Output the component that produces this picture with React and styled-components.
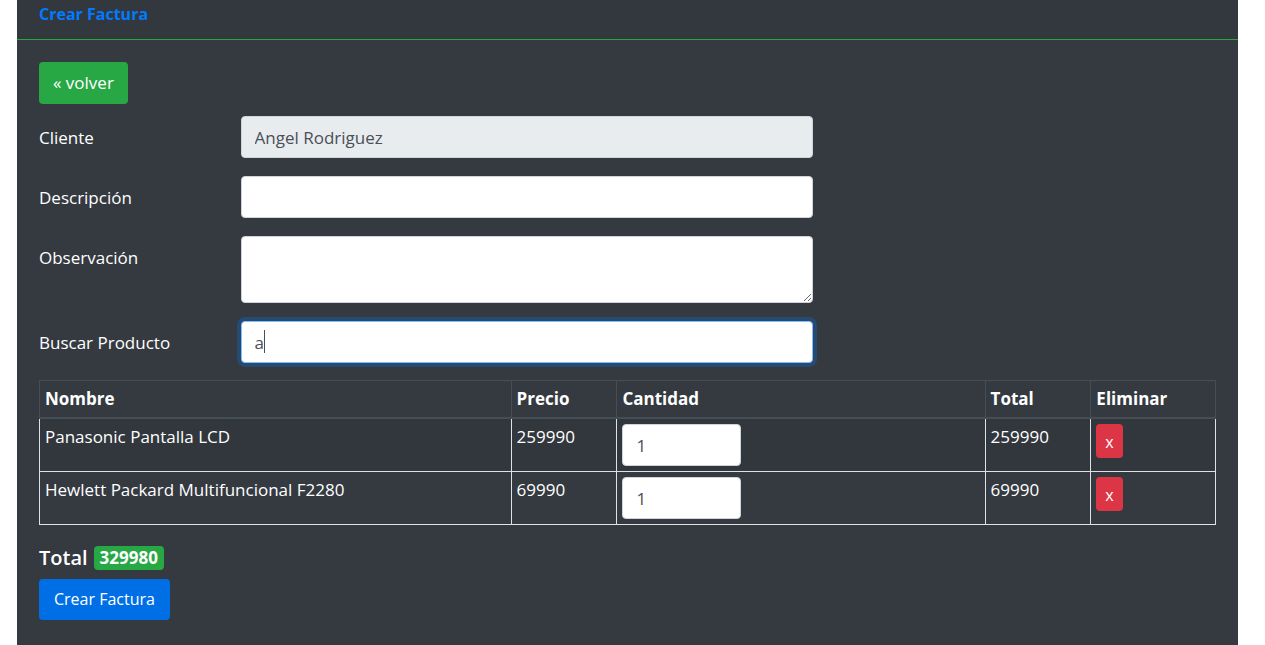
import React, { useState } from "react";
import styled, { createGlobalStyle, css } from "styled-components";

const GlobalStyle = createGlobalStyle`
  *, *::before, *::after { box-sizing: border-box; }
  body {
    margin: 0;
    background: #fff;
    color: #fff;
    font-family: "Segoe UI", "Open Sans", "Noto Sans", sans-serif;
    font-size: 17px;
    line-height: 26px;
  }
  input, textarea, button { font: inherit; }
`;

const Card = styled.main`
  min-height: 100vh;
  margin: 0 27px 0 17px;
  background: #343a40;
`;

const CardHeader = styled.header`
  padding: 0 22px 11px;
  line-height: 28px;
  font-weight: 700;
  font-size: 16px;
  color: #007bff;
  background: #32383e;
  border-bottom: 1px solid #28a745;
`;

const CardBody = styled.div`
  padding: 22px;
`;

const buttonBase = css`
  display: inline-block;
  padding: 7px 13px;
  border: 1px solid transparent;
  border-radius: 4px;
  color: #fff;
  text-decoration: none;
  cursor: pointer;
`;

const BackLink = styled.a`
  ${buttonBase}
  background: #28a745;
`;

const SubmitButton = styled.button`
  ${buttonBase}
  padding: 7px 14px;
  font-size: 16px;
  line-height: 25px;
  background: #006fe6;
`;

const DeleteButton = styled.button`
  ${buttonBase}
  display: block;
  padding: 5px 8px 3px;
  font-size: 16px;
  line-height: 24px;
  background: #dc3545;
`;

const Fields = styled.div`
  display: grid;
  gap: 18px;
  margin: 12px 0 17px;
`;

const FormRow = styled.div`
  display: flex;
  margin: 0 -16px;
`;

const Label = styled.label`
  flex: 0 0 16.6667%;
  padding: 9px 16px 7px;
`;

const Field = styled.div`
  position: relative;
  display: flex;
  flex: 0 0 50%;
  padding: 0 16px;
`;

const controlBase = css`
  display: block;
  width: 100%;
  padding: 7px 13px;
  color: #495057;
  background: #fff;
  border: 1px solid #ced4da;
  border-radius: 4px;
  outline: 0;

  &:focus {
    border-color: #80bdff;
    box-shadow: 0 0 0 4px rgba(0, 123, 255, 0.25);
  }
`;

const Input = styled.input`
  ${controlBase}
  height: 42px;
  &:disabled { background: #e9ecef; }
`;

const SearchInput = styled(Input)`
  caret-color: transparent;
`;

/* Repeats the typed text invisibly so that the bar stands at its end. */
const Caret = styled.span`
  position: absolute;
  top: 9px;
  left: 30px;
  display: flex;
  height: 23px;
  pointer-events: none;
  white-space: pre;
  color: transparent;
  border-right: 1px solid #495057;
`;

const Quantity = styled(Input)`
  width: 119px;
  appearance: textfield;
`;

const TextArea = styled.textarea`
  ${controlBase}
  height: 67px;
  resize: vertical;
`;

const Table = styled.table`
  width: 100%;
  table-layout: fixed;
  border-collapse: collapse;
  border: 1px solid #454d55;

  tbody tr:nth-of-type(odd) { background: rgba(0, 0, 0, 0.05); }
`;

const Th = styled.th`
  width: ${(p) => p.$width};
  padding: 5px;
  text-align: left;
  border: 1px solid #454d55;
  border-bottom-width: 2px;
`;

const Td = styled.td`
  padding: 5px;
  vertical-align: top;
  border: 1px solid #dee2e6;
`;

const TotalLine = styled.h5`
  display: flex;
  align-items: center;
  gap: 6px;
  margin: 20px 0 8px;
  font-size: 20px;
  font-weight: 600;
  line-height: 26px;
`;

const Badge = styled.span`
  padding: 0 6px;
  border-radius: 4px;
  background: #28a745;
  font-size: 17px;
  font-weight: 700;
  line-height: 24px;
`;

const initialItems = [
  { id: 1, name: "Panasonic Pantalla LCD", price: 259990, quantity: 1 },
  { id: 2, name: "Hewlett Packard Multifuncional F2280", price: 69990, quantity: 1 },
];

export default function App() {
  const [items, setItems] = useState(initialItems);
  const [search, setSearch] = useState("a");
  const [searching, setSearching] = useState(true);
  const total = items.reduce((sum, i) => sum + i.price * i.quantity, 0);
  const setQuantity = (id, quantity) =>
    setItems(items.map((i) => (i.id === id ? { ...i, quantity } : i)));

  return (
    <>
      <GlobalStyle />
      <Card>
        <CardHeader>Crear Factura</CardHeader>
        <CardBody>
          <BackLink href="#clientes">« volver</BackLink>
          <form onSubmit={(e) => e.preventDefault()}>
            <Fields>
              <FormRow>
                <Label htmlFor="cliente">Cliente</Label>
                <Field><Input id="cliente" defaultValue="Angel Rodriguez" disabled /></Field>
              </FormRow>
              <FormRow>
                <Label htmlFor="descripcion">Descripción</Label>
                <Field><Input id="descripcion" /></Field>
              </FormRow>
              <FormRow>
                <Label htmlFor="observacion">Observación</Label>
                <Field><TextArea id="observacion" /></Field>
              </FormRow>
              <FormRow>
                <Label htmlFor="producto">Buscar Producto</Label>
                <Field>
                  <SearchInput
                    id="producto"
                    value={search}
                    autoComplete="off"
                    autoFocus
                    onChange={(e) => setSearch(e.target.value)}
                    onFocus={() => setSearching(true)}
                    onBlur={() => setSearching(false)}
                  />
                  {searching && <Caret aria-hidden="true">{search}</Caret>}
                </Field>
              </FormRow>
            </Fields>
            <Table>
              <thead>
                <tr>
                  <Th $width="40.1%">Nombre</Th>
                  <Th $width="9%">Precio</Th>
                  <Th>Cantidad</Th>
                  <Th $width="9%">Total</Th>
                  <Th $width="10.6%">Eliminar</Th>
                </tr>
              </thead>
              <tbody>
                {items.map((i) => (
                  <tr key={i.id}>
                    <Td>{i.name}</Td>
                    <Td>{i.price}</Td>
                    <Td>
                      <Quantity
                        type="number"
                        aria-label={`Cantidad de ${i.name}`}
                        value={i.quantity}
                        onChange={(e) => setQuantity(i.id, Number(e.target.value))}
                      />
                    </Td>
                    <Td>{i.price * i.quantity}</Td>
                    <Td>
                      <DeleteButton
                        type="button"
                        aria-label={`Eliminar ${i.name}`}
                        onClick={() => setItems(items.filter((o) => o.id !== i.id))}
                      >
                        x
                      </DeleteButton>
                    </Td>
                  </tr>
                ))}
              </tbody>
            </Table>
            <TotalLine>Total <Badge>{total}</Badge></TotalLine>
            <SubmitButton type="submit">Crear Factura</SubmitButton>
          </form>
        </CardBody>
      </Card>
    </>
  );
}
